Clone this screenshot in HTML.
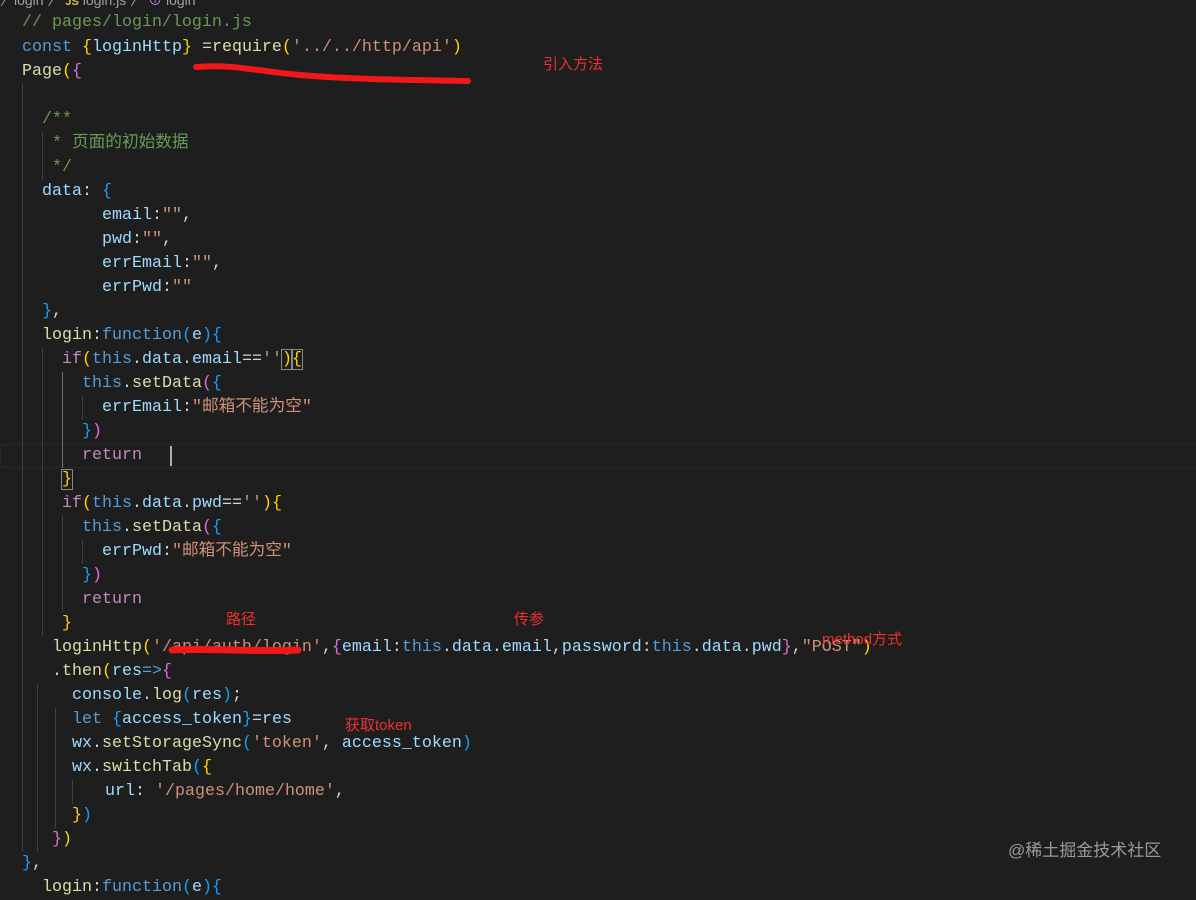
<!DOCTYPE html>
<html><head><meta charset="utf-8"><style>
body{margin:0;width:1196px;height:884px;background:#1e1e1e;overflow:hidden;position:relative;font-family:"Liberation Mono","Noto Sans CJK SC",monospace;font-size:16.67px;color:#d4d4d4}
.l{position:absolute;white-space:pre;height:24px;line-height:24px}
.c{color:#6a9955}.k{color:#569cd6}.v{color:#9cdcfe}.s{color:#ce9178}.f{color:#dcdcaa}.y{color:#ffd700}.p{color:#da70d6}.r{color:#c586c0}.b{color:#179fff}.w{color:#d4d4d4}
.g{position:absolute;width:1px;background:#404040}
.a{position:absolute;color:#f03030;font-family:"Liberation Sans","Noto Sans CJK SC",sans-serif;font-size:15px;white-space:nowrap}
</style></head><body>
<div class="l" style="left:0;top:-12px;color:#a0a0a0;font-family:'Liberation Sans',sans-serif;font-size:14px">〉login 〉 <span style="color:#cbcb41;font-weight:bold;font-size:11px">JS</span> login.js 〉 <span style="color:#b180d7">⊕</span> login</div>
<div style="position:absolute;left:0;top:444px;width:1196px;height:22px;border:1px solid #282828"></div>
<div class="g" style="left:22px;top:84px;height:768px"></div>
<div class="g" style="left:42px;top:132px;height:48px"></div>
<div class="g" style="left:42px;top:348px;height:288px"></div>
<div class="g" style="left:62px;top:372px;height:96px;background:#707070"></div>
<div class="g" style="left:62px;top:516px;height:96px"></div>
<div class="g" style="left:82px;top:396px;height:24px"></div>
<div class="g" style="left:82px;top:540px;height:24px"></div>
<div class="g" style="left:37px;top:684px;height:168px"></div>
<div class="g" style="left:55px;top:708px;height:120px"></div>
<div class="g" style="left:72px;top:780px;height:24px"></div>

<div class="l c" style="left:22px;top:11px">// pages/login/login.js</div>
<div class="l" style="left:22px;top:36px"><span class="k">const</span> <span class="y">{</span><span class="v">loginHttp</span><span class="y">}</span> =<span class="f">require</span><span class="y">(</span><span class="s">'../../http/api'</span><span class="y">)</span></div>
<div class="l" style="left:22px;top:60px"><span class="f">Page</span><span class="y">(</span><span class="p">{</span></div>
<div class="l c" style="left:42px;top:108px">/**</div>
<div class="l c" style="left:42px;top:132px"> * 页面的初始数据</div>
<div class="l c" style="left:42px;top:156px"> */</div>
<div class="l" style="left:42px;top:180px"><span class="v">data</span>: <span class="b">{</span></div>
<div class="l" style="left:102px;top:204px"><span class="v">email</span>:<span class="s">""</span>,</div>
<div class="l" style="left:102px;top:228px"><span class="v">pwd</span>:<span class="s">""</span>,</div>
<div class="l" style="left:102px;top:252px"><span class="v">errEmail</span>:<span class="s">""</span>,</div>
<div class="l" style="left:102px;top:276px"><span class="v">errPwd</span>:<span class="s">""</span></div>
<div class="l" style="left:42px;top:300px"><span class="b">}</span>,</div>
<div class="l" style="left:42px;top:324px"><span class="f">login</span>:<span class="k">function</span><span class="b">(</span><span class="v">e</span><span class="b">){</span></div>
<div class="l" style="left:62px;top:348px"><span class="r">if</span><span class="y">(</span><span class="k">this</span>.<span class="v">data</span>.<span class="v">email</span>==<span class="s">''</span><span class="y" style="outline:1px solid #888">)</span><span class="y" style="outline:1px solid #888">{</span></div>
<div class="l" style="left:82px;top:372px"><span class="k">this</span>.<span class="f">setData</span><span class="p">(</span><span class="b">{</span></div>
<div class="l" style="left:102px;top:396px"><span class="v">errEmail</span>:<span class="s">"邮箱不能为空"</span></div>
<div class="l" style="left:82px;top:420px"><span class="b">}</span><span class="p">)</span></div>
<div class="l" style="left:82px;top:444px"><span class="r">return</span></div>
<div style="position:absolute;left:170px;top:446px;width:2px;height:20px;background:#aeafad"></div>
<div class="l" style="left:62px;top:468px"><span class="y" style="outline:1px solid #888">}</span></div>
<div class="l" style="left:62px;top:492px"><span class="r">if</span><span class="y">(</span><span class="k">this</span>.<span class="v">data</span>.<span class="v">pwd</span>==<span class="s">''</span><span class="y">){</span></div>
<div class="l" style="left:82px;top:516px"><span class="k">this</span>.<span class="f">setData</span><span class="p">(</span><span class="b">{</span></div>
<div class="l" style="left:102px;top:540px"><span class="v">errPwd</span>:<span class="s">"邮箱不能为空"</span></div>
<div class="l" style="left:82px;top:564px"><span class="b">}</span><span class="p">)</span></div>
<div class="l" style="left:82px;top:588px"><span class="r">return</span></div>
<div class="l" style="left:62px;top:612px"><span class="y">}</span></div>
<div class="l" style="left:52px;top:636px"><span class="f">loginHttp</span><span class="y">(</span><span class="s">'/api/auth/login'</span>,<span class="p">{</span><span class="v">email</span>:<span class="k">this</span>.<span class="v">data</span>.<span class="v">email</span>,<span class="v">password</span>:<span class="k">this</span>.<span class="v">data</span>.<span class="v">pwd</span><span class="p">}</span>,<span class="s">"POST"</span><span class="y">)</span></div>
<div class="l" style="left:52px;top:660px">.<span class="f">then</span><span class="y">(</span><span class="v">res</span><span class="k">=&gt;</span><span class="p">{</span></div>
<div class="l" style="left:72px;top:684px"><span class="v">console</span>.<span class="f">log</span><span class="b">(</span><span class="v">res</span><span class="b">)</span>;</div>
<div class="l" style="left:72px;top:708px"><span class="k">let</span> <span class="b">{</span><span class="v">access_token</span><span class="b">}</span>=<span class="v">res</span></div>
<div class="l" style="left:72px;top:732px"><span class="v">wx</span>.<span class="f">setStorageSync</span><span class="b">(</span><span class="s">'token'</span>, <span class="v">access_token</span><span class="b">)</span></div>
<div class="l" style="left:72px;top:756px"><span class="v">wx</span>.<span class="f">switchTab</span><span class="b">(</span><span class="y">{</span></div>
<div class="l" style="left:105px;top:780px"><span class="v">url</span>: <span class="s">'/pages/home/home'</span>,</div>
<div class="l" style="left:72px;top:804px"><span class="y">}</span><span class="b">)</span></div>
<div class="l" style="left:52px;top:828px"><span class="p">}</span><span class="y">)</span></div>
<div class="l" style="left:22px;top:852px"><span class="b">}</span>,</div>
<div class="l" style="left:42px;top:876px"><span class="f">login</span>:<span class="k">function</span><span class="b">(</span><span class="v">e</span><span class="b">){</span></div>

<svg style="position:absolute;left:0;top:0" width="1196" height="884">
<path d="M196 67 C230 64 250 70 300 75 C360 80 420 80 468 81" stroke="#f01818" stroke-width="6" fill="none" stroke-linecap="round"/>
<path d="M172 650 C210 648 250 652 298 650" stroke="#f01818" stroke-width="7" fill="none" stroke-linecap="round"/>
</svg>
<div class="a" style="left:543px;top:53px">引入方法</div>
<div class="a" style="left:226px;top:608px">路径</div>
<div class="a" style="left:514px;top:608px">传参</div>
<div class="a" style="left:822px;top:628px">method方式</div>
<div class="a" style="left:345px;top:714px">获取token</div>
<div class="a" style="left:1008px;top:836px;color:#9a9a9a;font-size:17px">@稀土掘金技术社区</div>
</body></html>
